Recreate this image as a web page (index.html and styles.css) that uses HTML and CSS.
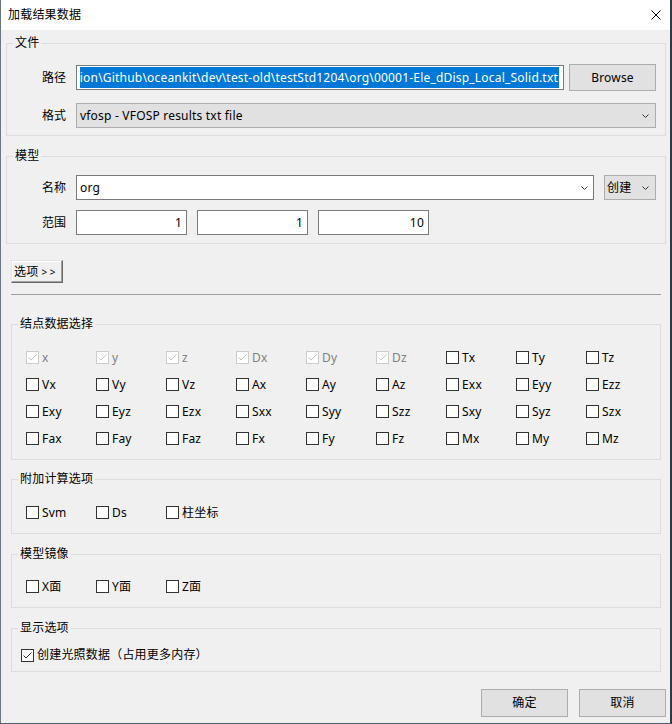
FILE: index.html
```html
<!DOCTYPE html>
<html lang="zh-CN">
<head>
<meta charset="utf-8">
<title>加载结果数据</title>
<link rel="stylesheet" href="styles.css">
</head>
<body>
<div class="window">
  <div class="titlebar">
    <span class="title">加载结果数据</span>
    <svg class="close" width="10" height="10" viewBox="0 0 10 10"><path d="M0.5 0.5L9.5 9.5M9.5 0.5L0.5 9.5" stroke="#000" stroke-width="1" fill="none"/></svg>
  </div>

  <div class="group g-top g-file">
    <div class="gtitle">文件</div>
    <div class="frow row-path">
      <span class="lbl">路径</span>
      <div class="field path"><div class="clip"><span class="sel">ion\Github\oceankit\dev\test-old\testStd1204\org\00001-Ele_dDisp_Local_Solid.txt</span></div></div>
      <div class="btn browse">Browse</div>
    </div>
    <div class="frow row-fmt">
      <span class="lbl">格式</span>
      <div class="combo ro fmt"><span class="ctext">vfosp - VFOSP results txt file</span><svg class="chev" width="7" height="4" viewBox="0 0 7 4"><path d="M0.5 0.5L3.5 3.5L6.5 0.5" stroke="#333" fill="none"/></svg></div>
    </div>
  </div>

  <div class="group g-top g-model">
    <div class="gtitle">模型</div>
    <div class="frow row-name">
      <span class="lbl">名称</span>
      <div class="combo edit name"><span class="ctext">org</span><svg class="chev" width="7" height="4" viewBox="0 0 7 4"><path d="M0.5 0.5L3.5 3.5L6.5 0.5" stroke="#333" fill="none"/></svg></div>
      <div class="btn create"><span>创建</span><svg class="chev" width="7" height="4" viewBox="0 0 7 4"><path d="M0.5 0.5L3.5 3.5L6.5 0.5" stroke="#333" fill="none"/></svg></div>
    </div>
    <div class="frow row-range">
      <span class="lbl">范围</span>
      <div class="field num">1</div>
      <div class="field num">1</div>
      <div class="field num">10</div>
    </div>
  </div>

  <div class="btn3d options">选项 <span class="gt">&gt; &gt;</span></div>
  <div class="sep"></div>

  <div class="group g-low g-nodes">
    <div class="gtitle">结点数据选择</div>
    <div class="cbgrid">
      <label class="cbi dis"><svg class="cb" width="13" height="13" viewBox="0 0 13 13"><rect x="0.5" y="0.5" width="12" height="12" fill="#fff" stroke="#ccc"/><path d="M2.5 6.5L5 9L10.5 3.5" stroke="#c4c4c4" fill="none"/></svg><span>x</span></label>
      <label class="cbi dis"><svg class="cb" width="13" height="13" viewBox="0 0 13 13"><rect x="0.5" y="0.5" width="12" height="12" fill="#fff" stroke="#ccc"/><path d="M2.5 6.5L5 9L10.5 3.5" stroke="#c4c4c4" fill="none"/></svg><span>y</span></label>
      <label class="cbi dis"><svg class="cb" width="13" height="13" viewBox="0 0 13 13"><rect x="0.5" y="0.5" width="12" height="12" fill="#fff" stroke="#ccc"/><path d="M2.5 6.5L5 9L10.5 3.5" stroke="#c4c4c4" fill="none"/></svg><span>z</span></label>
      <label class="cbi dis"><svg class="cb" width="13" height="13" viewBox="0 0 13 13"><rect x="0.5" y="0.5" width="12" height="12" fill="#fff" stroke="#ccc"/><path d="M2.5 6.5L5 9L10.5 3.5" stroke="#c4c4c4" fill="none"/></svg><span>Dx</span></label>
      <label class="cbi dis"><svg class="cb" width="13" height="13" viewBox="0 0 13 13"><rect x="0.5" y="0.5" width="12" height="12" fill="#fff" stroke="#ccc"/><path d="M2.5 6.5L5 9L10.5 3.5" stroke="#c4c4c4" fill="none"/></svg><span>Dy</span></label>
      <label class="cbi dis"><svg class="cb" width="13" height="13" viewBox="0 0 13 13"><rect x="0.5" y="0.5" width="12" height="12" fill="#fff" stroke="#ccc"/><path d="M2.5 6.5L5 9L10.5 3.5" stroke="#c4c4c4" fill="none"/></svg><span>Dz</span></label>
      <label class="cbi"><span class="box"></span><span>Tx</span></label>
      <label class="cbi"><span class="box"></span><span>Ty</span></label>
      <label class="cbi"><span class="box"></span><span>Tz</span></label>

      <label class="cbi"><span class="box"></span><span>Vx</span></label>
      <label class="cbi"><span class="box"></span><span>Vy</span></label>
      <label class="cbi"><span class="box"></span><span>Vz</span></label>
      <label class="cbi"><span class="box"></span><span>Ax</span></label>
      <label class="cbi"><span class="box"></span><span>Ay</span></label>
      <label class="cbi"><span class="box"></span><span>Az</span></label>
      <label class="cbi"><span class="box"></span><span>Exx</span></label>
      <label class="cbi"><span class="box"></span><span>Eyy</span></label>
      <label class="cbi"><span class="box"></span><span>Ezz</span></label>

      <label class="cbi"><span class="box"></span><span>Exy</span></label>
      <label class="cbi"><span class="box"></span><span>Eyz</span></label>
      <label class="cbi"><span class="box"></span><span>Ezx</span></label>
      <label class="cbi"><span class="box"></span><span>Sxx</span></label>
      <label class="cbi"><span class="box"></span><span>Syy</span></label>
      <label class="cbi"><span class="box"></span><span>Szz</span></label>
      <label class="cbi"><span class="box"></span><span>Sxy</span></label>
      <label class="cbi"><span class="box"></span><span>Syz</span></label>
      <label class="cbi"><span class="box"></span><span>Szx</span></label>

      <label class="cbi"><span class="box"></span><span>Fax</span></label>
      <label class="cbi"><span class="box"></span><span>Fay</span></label>
      <label class="cbi"><span class="box"></span><span>Faz</span></label>
      <label class="cbi"><span class="box"></span><span>Fx</span></label>
      <label class="cbi"><span class="box"></span><span>Fy</span></label>
      <label class="cbi"><span class="box"></span><span>Fz</span></label>
      <label class="cbi"><span class="box"></span><span>Mx</span></label>
      <label class="cbi"><span class="box"></span><span>My</span></label>
      <label class="cbi"><span class="box"></span><span>Mz</span></label>
    </div>
  </div>

  <div class="group g-low g-extra">
    <div class="gtitle">附加计算选项</div>
    <div class="cbgrid">
      <label class="cbi"><span class="box"></span><span>Svm</span></label>
      <label class="cbi"><span class="box"></span><span>Ds</span></label>
      <label class="cbi"><span class="box"></span><span>柱坐标</span></label>
    </div>
  </div>

  <div class="group g-low g-mirror">
    <div class="gtitle">模型镜像</div>
    <div class="cbgrid">
      <label class="cbi"><span class="box"></span><span>X面</span></label>
      <label class="cbi"><span class="box"></span><span>Y面</span></label>
      <label class="cbi"><span class="box"></span><span>Z面</span></label>
    </div>
  </div>

  <div class="group g-low g-display">
    <div class="gtitle">显示选项</div>
    <div class="single">
      <label class="cbi"><svg class="cb" width="13" height="13" viewBox="0 0 13 13"><rect x="0.5" y="0.5" width="12" height="12" fill="#fff" stroke="#333"/><path d="M2.5 6.5L5 9L10.5 3.5" stroke="#333" fill="none"/></svg><span>创建光照数据（占用更多内存）</span></label>
    </div>
  </div>

  <div class="actions">
    <div class="btn act">确定</div>
    <div class="btn act">取消</div>
  </div>
</div>
</body>
</html>
```

FILE: styles.css
```css
* { box-sizing: border-box; }
html, body { margin: 0; padding: 0; }
body {
  width: 672px;
  height: 724px;
  overflow: hidden;
  background: #f0f0f0;
  color: #000;
  font-family: "Noto Sans", "Noto Sans CJK SC", sans-serif;
  font-size: 12px;
  line-height: 16px;
  letter-spacing: 0.2px;
}
.window {
  width: 672px;
  height: 724px;
  background: #f0f0f0;
  border-left: 1px solid #6b7480;
  border-right: 2px solid #2f3a47;
  border-bottom: 1px solid #555d68;
  display: flex;
  flex-direction: column;
}
.titlebar {
  height: 30px;
  flex: none;
  background: #fff;
  display: flex;
  align-items: center;
  justify-content: space-between;
  padding: 0 9px 0 7px;
}
.title { font-size: 12px; }
.close { display: block; }

.group {
  flex: none;
  border: 1px solid #dcdcdc;
}
.gtitle {
  width: fit-content;
  margin: -9px 0 0 6px;
  padding: 0 2px;
  height: 16px;
  line-height: 16px;
  background: #f0f0f0;
}
.g-top { margin-left: 5px; margin-right: 4px; }
.g-low { margin-left: 10px; margin-right: 9px; }

.g-file { margin-top: 13px; padding-bottom: 7px; }
.g-model { margin-top: 20px; padding-bottom: 8px; }

.frow {
  display: flex;
  align-items: center;
  padding-left: 35px;
}
.lbl { width: 24px; margin-right: 10px; text-align: right; white-space: nowrap; letter-spacing: 0; }

.row-path { margin-top: 13px; height: 27px; }
.row-fmt { margin-top: 12px; height: 25px; }
.row-name { margin-top: 11px; height: 25px; }
.row-range { margin-top: 10px; height: 25px; gap: 10px; }
.row-range .lbl { margin-right: 0; }

.field {
  height: 25px;
  background: #fff;
  border: 1px solid #7a7a7a;
  display: flex;
  align-items: center;
}
.path { width: 488px; padding: 0 4px 0 3px; }
.clip {
  flex: 1;
  overflow: hidden;
  display: flex;
  justify-content: flex-end;
  white-space: nowrap;
}
.sel {
  flex: none;
  background: #0078d7;
  color: #fff;
  line-height: 21px;
  padding: 0 1px;
}
.num { width: 111px; justify-content: flex-end; padding-right: 4px; }

.btn {
  background: #e1e1e1;
  border: 1px solid #adadad;
  display: flex;
  align-items: center;
  justify-content: center;
}
.browse { width: 87px; height: 27px; margin-left: 5px; }

.combo {
  height: 25px;
  display: flex;
  align-items: center;
  justify-content: space-between;
  padding: 0 6px 0 3px;
}
.combo.ro { background: #e1e1e1; border: 1px solid #adadad; }
.combo.edit { background: #fff; border: 1px solid #7a7a7a; padding-right: 5px; }
.fmt { width: 580px; }
.name { width: 518px; }
.chev { display: block; flex: none; }
.create {
  width: 52px;
  height: 25px;
  margin-left: 10px;
  justify-content: space-between;
  padding: 0 6px 0 2px;
}

.btn3d {
  flex: none;
  width: 52px;
  height: 23px;
  margin: 16px 0 0 10px;
  background: #f0f0f0;
  border: 1px solid;
  border-color: #e3e3e3 #696969 #696969 #e3e3e3;
  box-shadow: inset -1px -1px #a0a0a0, inset 1px 1px #fff;
  display: flex;
  align-items: center;
  padding-left: 2px;
  white-space: nowrap;
}
.gt { font-size: 10px; margin-left: 3px; letter-spacing: 0; }

.sep {
  flex: none;
  height: 1px;
  background: #a0a0a0;
  margin: 11px 9px 0 10px;
}

.g-nodes { margin-top: 29px; padding-bottom: 7px; }
.g-extra { margin-top: 19px; padding-bottom: 7px; }
.g-mirror { margin-top: 20px; padding-bottom: 7px; }
.g-display { margin-top: 20px; padding-bottom: 6px; }

.cbgrid {
  display: grid;
  grid-template-columns: repeat(9, 70px);
  grid-auto-rows: 27px;
  padding-left: 14px;
}
.g-nodes .cbgrid { padding-top: 12px; }
.g-extra .cbgrid { padding-top: 12px; }
.g-mirror .cbgrid { padding-top: 11px; }

.cbi {
  display: flex;
  align-items: center;
  gap: 3px;
  white-space: nowrap;
}
.box {
  flex: none;
  width: 13px;
  height: 13px;
  background: #fff;
  border: 1px solid #333;
}
.cb { display: block; flex: none; }
.cbi.dis { color: #7f7f7f; }

.single {
  height: 20px;
  margin-top: 9px;
  padding-left: 9px;
  display: flex;
  align-items: center;
}

.actions {
  flex: none;
  display: flex;
  justify-content: flex-end;
  gap: 11px;
  margin-top: 17px;
  padding-right: 4px;
}
.act { width: 87px; height: 28px; }
```
